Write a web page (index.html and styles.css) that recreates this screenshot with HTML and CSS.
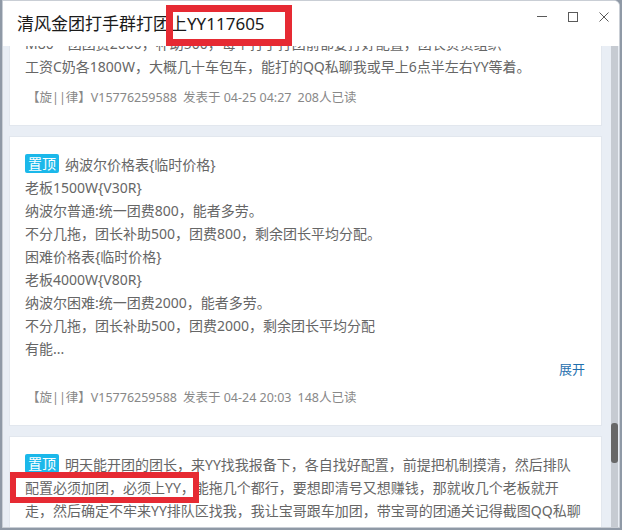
FILE: index.html
```html
<!DOCTYPE html>
<html lang="zh-CN">
<head>
  <meta charset="UTF-8" />
  <meta name="viewport" content="width=device-width, initial-scale=1.0"/>
  <title>清风金团打手群打团上YY117605</title>
  <link rel="stylesheet" href="styles.css">
</head>
<body>
  <div class="window">
    <!-- Title bar -->
    <header class="titlebar">
      <span class="title">清风金团打手群打团上YY117605</span>
      <div class="controls">
        <svg class="ctl" viewBox="0 0 10 10"><path d="M0 4.5H10"/></svg>
        <svg class="ctl" viewBox="0 0 10 10"><rect x="0.5" y="0.5" width="9" height="9"/></svg>
        <svg class="ctl" viewBox="0 0 10 10"><path d="M0.5 0.5L9.5 9.5M9.5 0.5L0.5 9.5"/></svg>
      </div>
    </header>

    <div class="main">
      <div class="feed">
        <!-- Post 1 (scrolled partly out of view) -->
        <div class="post first">
          <div class="content">M80一团团费2000，补助500，每个打手打团前都要打好配置，团长负责组织
工资C奶各1800W，大概几十车包车，能打的QQ私聊我或早上6点半左右YY等着。</div>
          <div class="meta">
            <span>【旋||律】V15776259588</span>
            <span>发表于 04-25 04:27</span>
            <span>208人已读</span>
          </div>
        </div>

        <!-- Post 2 -->
        <div class="post">
          <div class="content"><span class="tag">置顶</span>纳波尔价格表{临时价格}
老板1500W{V30R}
纳波尔普通:统一团费800，能者多劳。
不分几拖，团长补助500，团费800，剩余团长平均分配。
困难价格表{临时价格}
老板4000W{V80R}
纳波尔困难:统一团费2000，能者多劳。
不分几拖，团长补助500，团费2000，剩余团长平均分配
有能...</div>
          <div class="more">展开</div>
          <div class="meta">
            <span>【旋||律】V15776259588</span>
            <span>发表于 04-24 20:03</span>
            <span>148人已读</span>
          </div>
        </div>

        <!-- Post 3 -->
        <div class="post">
          <div class="content"><span class="tag">置顶</span>明天能开团的团长，来YY找我报备下，各自找好配置，前提把机制摸清，然后排队
配置必须加团，必须上YY，能拖几个都行，要想即清号又想赚钱，那就收几个老板就开
走，然后确定不牢来YY排队区找我，我让宝哥跟车加团，带宝哥的团通关记得截图QQ私聊
发我，这样大家都能在3天内把号清了还能赚到钱，谢谢</div>
        </div>
      </div>

      <div class="scrollbar"><div class="thumb"></div></div>
    </div>

    <!-- red annotation boxes -->
    <span class="mark mark-title"></span>
    <span class="mark mark-line"></span>
  </div>
</body>
</html>
```

FILE: styles.css
```css
* {
  box-sizing: border-box;
}

body {
  margin: 0;
  width: 622px;
  height: 530px;
  overflow: hidden;
  background: #8f99a6;
  font-family: "Noto Sans", "Noto Sans CJK SC", sans-serif;
}

.window {
  position: relative;
  margin-left: 2px;
  width: 618px;
  height: 528px;
  background: #fff;
  border: 1px solid #c9ced5;
  border-radius: 0 6px 0 0;
  display: flex;
  flex-direction: column;
  overflow: hidden;
}

.titlebar {
  height: 45px;
  flex-shrink: 0;
  display: flex;
  align-items: center;
  padding: 0 10px 0 14px;
  background: #fff;
}

.title {
  flex: 1;
  font-size: 17px;
  color: #1b1b1b;
  margin-top: -2px;
}

.controls {
  display: flex;
  align-items: center;
  gap: 21px;
  margin-top: -13px;
}

.ctl {
  width: 10px;
  height: 10px;
  fill: none;
  stroke: #5a5a5a;
  stroke-width: 1;
}

.main {
  flex: 1;
  display: flex;
  background: #e9eef5;
  overflow: hidden;
}

.feed {
  flex: 1;
  display: flex;
  flex-direction: column;
  gap: 12px;
  padding: 0 10px 0 7px;
  overflow: hidden;
}

.post {
  flex-shrink: 0;
  background: #fff;
  padding: 16px 16px 17px 15px;
  box-shadow: 0 0 0 1px #e2e7ee;
}

.post.first {
  margin-top: -30px;
}

.content {
  font-size: 14px;
  line-height: 23px;
  color: #666;
  white-space: pre-line;
}

.tag {
  display: inline-block;
  background: #1bb8ea;
  color: #fff;
  font-size: 14px;
  line-height: 19px;
  padding: 0 3px;
  border-radius: 2px;
  margin-right: 6px;
  vertical-align: 1px;
}

.more {
  text-align: right;
  font-size: 13px;
  line-height: 18px;
  color: #1f6fae;
}

.meta {
  margin-top: 10px;
  padding-left: 2px;
  font-size: 12.5px;
  line-height: 20px;
  color: #888;
  display: flex;
  gap: 6px;
}

.scrollbar {
  width: 7px;
  flex-shrink: 0;
  margin-right: 1px;
  background: #c6cbd2;
}

.thumb {
  margin-top: 377px;
  height: 40px;
  border-radius: 3px;
  background: #686868;
}

.mark {
  position: absolute;
  border: 7px solid #e62a33;
}

.mark-title {
  left: 163px;
  top: 4px;
  width: 126px;
  height: 41px;
}

.mark-line {
  left: 7px;
  top: 471px;
  width: 189px;
  height: 31px;
  border-width: 6px;
}
```
